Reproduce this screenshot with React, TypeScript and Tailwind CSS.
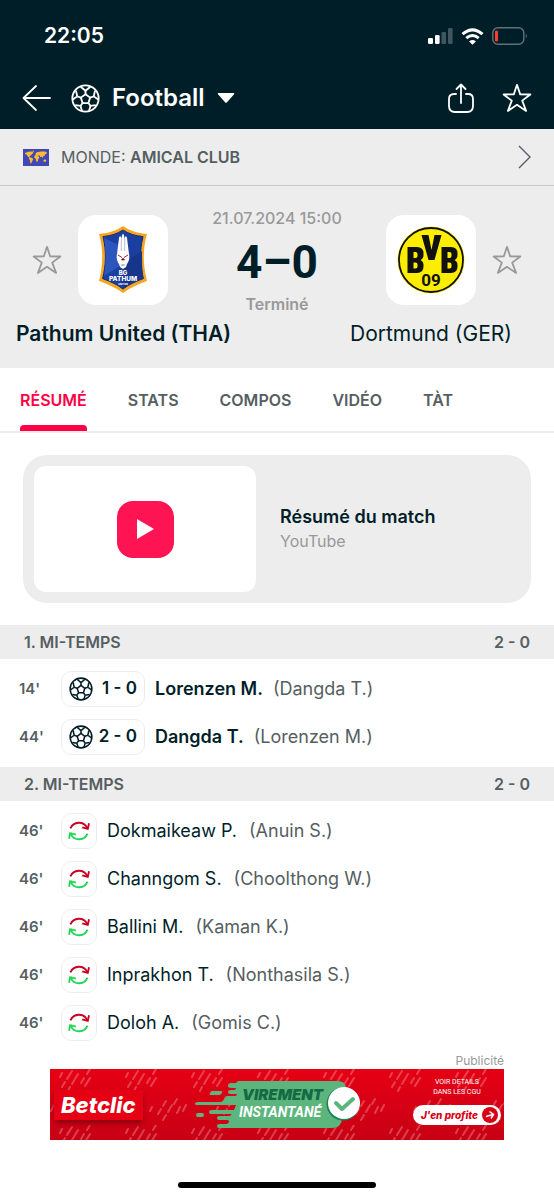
import type { ReactNode } from "react";

type Goal = { minute: string; score: string; scorer: string; assist: string };
type Substitution = { minute: string; playerIn: string; playerOut: string };

const tabs = ["Résumé", "Stats", "Compos", "Vidéo", "Tàt"];

const goals: Goal[] = [
  { minute: "14'", score: "1 - 0", scorer: "Lorenzen M.", assist: "(Dangda T.)" },
  { minute: "44'", score: "2 - 0", scorer: "Dangda T.", assist: "(Lorenzen M.)" },
];

const substitutions: Substitution[] = [
  { minute: "46'", playerIn: "Dokmaikeaw P.", playerOut: "(Anuin S.)" },
  { minute: "46'", playerIn: "Channgom S.", playerOut: "(Choolthong W.)" },
  { minute: "46'", playerIn: "Ballini M.", playerOut: "(Kaman K.)" },
  { minute: "46'", playerIn: "Inprakhon T.", playerOut: "(Nonthasila S.)" },
  { minute: "46'", playerIn: "Doloh A.", playerOut: "(Gomis C.)" },
];

const BallIcon = ({ className }: { className?: string }) => (
  <svg viewBox="0 0 30 30" fill="none" stroke="currentColor" strokeWidth="1.9" strokeLinejoin="round" className={className}>
    <circle cx="15" cy="15" r="13.6" />
    <path d="M15 10.6l4.8 3.5-1.8 5.6h-6l-1.800-5.600z" />
    <path d="M15 10.600V7M19.800 14.100l3.800-1.300M18 19.700l2.200 3M12 19.700l-2.200 3M10.200 14.100l-3.800-1.300" />
    <path d="M15 7l-5-4.200M15 7l5-4.200M23.600 12.800l1.200-6M23.600 12.800l4.900 3.600M20.200 22.700l5.400-.8M20.200 22.700L18.600 28M9.800 22.700L11.400 28M9.800 22.700l-5.400-.8M6.400 12.800L1.500 16.400M6.400 12.800l-1.200-6" />
  </svg>
);

const StarIcon = ({ className }: { className?: string }) => (
  <svg viewBox="0 0 30 30" fill="none" stroke="currentColor" strokeWidth="1.8" strokeLinejoin="round" className={className}>
    <path d="M15 1.8l3.2 9.6 10.2.1-8.2 6.1 3.9 10.3L15 21.8l-9.1 6.1 3.9-10.3-8.2-6.1 10.2-.1z" />
  </svg>
);

const SwapIcon = () => (
  <svg viewBox="0 0 24 24" fill="none" strokeWidth="1.8" className="size-6">
    <g stroke="#c8001e">
      <path d="M3.400 9.400C6.400 2.400 16.400 1.400 20.400 9.200" />
      <path d="M22 4.200l-1.200 5.600-5.600-1.400" />
    </g>
    <g stroke="#1fd655">
      <path d="M20.600 14.600C17.600 21.600 7.600 22.600 3.600 14.800" />
      <path d="M2 19.800l1.200-5.600 5.600 1.400" />
    </g>
  </svg>
);

const WorldFlag = () => (
  <svg viewBox="0 0 26 17" className="h-[17px] w-[26px]">
    <rect width="26" height="17" fill="#3f48b5" />
    <path
      fill="#fdb933"
      d="M2 4l3-1.2 4-.3 1.5 1L9 5.2 7.6 6.6 6.4 7.4l1 1 1.8.6 1.2 1.4-1.2 1.6-1 2.4-.9-.4-.3-2.6-1-1.6.3-1.4L4.6 7.2 3.4 5.2 2 5.2zM9 2l2.200-.4-.6 1.4zM12.400 5.400l.6-1.600 2-.8 3-.6 4 .2 2 1-.6 1.200-1.400.6-.6 1.600-1.400.4-.6 1.600-.9-1.600-1 .8-.9-1.600-1.400-.2.4 1.600 1 .2-1.300 1.800-.5 2.200-1 .8-.8-1.400-.2-1.800-1.600-1 .2-1.800 1.200-.9zM20.400 11l1.600-.8 1.400 1.400-.8 1.400-2-.4z"
    />
  </svg>
);

const PathumCrest = () => (
  <svg viewBox="0 0 50 70" className="h-[70px] w-[50px]" role="img" aria-label="BG Pathum United">
    <path d="M25 1c6 4.600 14 7 24 8-4.600 16-4 32 0 47-8 3-16 6-24 12-8-6-16-9-24-12 4-15 4.600-31 0-47C11 8 19 5.600 25 1z" fill="#f5a623" />
    <path d="M25 5c6 4 12 5.600 20 6.600-3.600 15-3 28 .4 42C38 56.400 31.500 59 25 64c-6.500-5-13-7.600-20.400-10.400 3.400-14 4-27 .4-42C13 10.600 19 9 25 5z" fill="#1b3fa0" stroke="#142c6b" strokeWidth="1" />
    <path d="M25 22L6 13c2 12 2 24 0 38l19-12z" fill="#2c56bd" />
    <path d="M25 38l19-12c0 10 0 18 1.200 27-7.500 3-14 5.500-20.200 10.500z" fill="#18358c" />
    <path d="M19 29l2-16c.8-3 2.200-2 2.400 1l.7-4c.5-1.500 1.300-1.500 1.800 0l.7 4c.2-3 1.600-4 2.400-1l2 16c1 5-.5 8-2 10l-1 3-3 2-3-2-1-3c-1.500-2-3-5-2-10z" fill="#fff" />
    <path d="M23.300 14v12M26.700 14v12" stroke="#9aa3b8" strokeWidth=".7" />
    <path d="M20 30l4 2.500M30 30l-4 2.500" stroke="#c8102e" strokeWidth="1" />
    <path d="M25 33l-1.500 2h3zM23.500 40h3" stroke="#333" strokeWidth=".7" fill="#333" />
    <g fill="#fff" textAnchor="middle" fontFamily="Inter, sans-serif" fontWeight="800">
      <text x="25" y="50" fontSize="6">BG</text>
      <text x="25" y="56" fontSize="6.500">PATHUM</text>
      <text x="25" y="59.500" fontSize="2.500">UNITED</text>
    </g>
  </svg>
);

const DortmundCrest = () => (
  <svg viewBox="0 0 68 68" className="size-[68px]" role="img" aria-label="Borussia Dortmund">
    <circle cx="34" cy="34" r="33.500" fill="#fdf01a" />
    <circle cx="34" cy="34" r="32" fill="#fdee00" stroke="#111" strokeWidth="1.800" />
    <g fill="#111" fillRule="evenodd">
      <path d="M10.500 21h9.500q6.500 0 6.500 6.500v1.500q0 3.500-3 5 3 1.500 3 5v1.500q0 6.500-6.500 6.500h-9.500zM16.500 26v6h2q2 0 2-2v-2q0-2-2-2zM16.500 36.500v6h2q2 0 2-2v-2q0-2-2-2z" />
      <path d="M44.500 21h9.500q6.500 0 6.500 6.500v1.500q0 3.500-3 5 3 1.500 3 5v1.500q0 6.500-6.500 6.500h-9.500zM50.500 26v6h2q2 0 2-2v-2q0-2-2-2zM50.500 36.500v6h2q2 0 2-2v-2q0-2-2-2z" />
    </g>
    <path d="M24.500 9h7l3 15 3-15h7l-7 25h-6z" fill="#111" />
    <text x="34" y="60" textAnchor="middle" fontSize="17" fontWeight="700" fontFamily="Roboto, sans-serif" fill="#111">09</text>
  </svg>
);

const StatusBar = () => (
  <div className="flex items-center justify-between pt-5 pr-[26px] pl-11">
    <span className="text-[21px] leading-8 font-semibold">22:05</span>
    <div className="flex items-center gap-2">
      <svg viewBox="0 0 25 16" className="h-4 w-[25px]" fill="#fff">
        <rect y="10" width="5" height="6" rx="1.300" />
        <rect x="7" y="7" width="4.600" height="9" rx="1.300" />
        <rect x="13.500" y="4" width="4.600" height="12" rx="1.300" opacity=".25" />
        <rect x="20" width="4.600" height="16" rx="1.300" opacity=".25" />
      </svg>
      <svg viewBox="0 0 23 17" className="h-[17px] w-[23px]" fill="none" stroke="#fff" strokeWidth="3">
        <path d="M1.500 6.200q10-8.600 20 0M5.300 10.100q6.200-5.200 12.400 0" />
        <path d="M11.500 16.800l-3.400-3.400q3.400-2.600 6.800 0z" fill="#fff" stroke="none" />
      </svg>
      <svg viewBox="0 0 36 18" className="h-[18px] w-9" fill="none">
        <rect x=".8" y=".8" width="31" height="16.400" rx="5" stroke="#5f7278" strokeWidth="1.400" />
        <rect x="3" y="3.500" width="3" height="11" rx="1.300" fill="#ff3b30" />
        <path d="M33.800 6.500q2 2.500 0 5z" fill="#5f7278" />
      </svg>
    </div>
  </div>
);

const TopBar = () => (
  <div className="flex items-center px-[22px] pt-[26px] pb-[11px]">
    <button type="button" aria-label="Retour" className="mr-5">
      <svg viewBox="0 0 29 28" fill="none" stroke="currentColor" strokeWidth="1.800" strokeLinecap="round" strokeLinejoin="round" className="h-7 w-[29px]">
        <path d="M28 14H1.500M14 2L1.500 14 14 26" />
      </svg>
    </button>
    <button type="button" className="flex items-center gap-3">
      <BallIcon className="size-[29px]" />
      <span className="text-2xl leading-10 font-semibold">Football</span>
      <svg viewBox="0 0 18 10" className="h-[10px] w-[18px]" fill="currentColor">
        <path d="M1.500 0h15q1.500 0 .5 1.200L10 9.200q-1 1-2 0L1 1.200Q0 0 1.500 0z" />
      </svg>
    </button>
    <div className="ml-auto flex items-center gap-7">
      <button type="button" aria-label="Partager">
        <svg viewBox="0 0 26 30" fill="none" stroke="currentColor" strokeWidth="1.800" strokeLinecap="round" strokeLinejoin="round" className="h-[30px] w-[26px]">
          <path d="M8 11H6q-5 0-5 5v7q0 6 6 6h12q6 0 6-6v-7q0-5-5-5h-2M13 20V2M8.500 6L13 1.500 17.500 6" />
        </svg>
      </button>
      <button type="button" aria-label="Ajouter aux favoris">
        <StarIcon className="size-[30px]" />
      </button>
    </div>
  </div>
);

const TeamLogo = ({ children }: { children: ReactNode }) => (
  <div className="flex size-[90px] items-center justify-center rounded-[18px] bg-white">{children}</div>
);

const MatchHeader = () => (
  <section className="bg-[#ededed] px-4 pt-5 pb-[18px]">
    <div className="flex items-center justify-center">
      <div className="flex flex-1 items-center justify-end gap-4">
        <button type="button" aria-label="Suivre Pathum United" className="text-[#999]">
          <StarIcon className="size-[30px]" />
        </button>
        <TeamLogo>
          <PathumCrest />
        </TeamLogo>
      </div>
      <div className="flex w-[218px] flex-col items-center text-[#999]">
        <span className="text-base leading-6 font-medium">21.07.2024 15:00</span>
        <span className="font-[Roboto,sans-serif] text-[46px] leading-[64px] font-bold text-[#001e28]">4–0</span>
        <span className="text-base leading-5 font-semibold">Terminé</span>
      </div>
      <div className="flex flex-1 items-center gap-4">
        <TeamLogo>
          <DortmundCrest />
        </TeamLogo>
        <button type="button" aria-label="Suivre Dortmund" className="text-[#999]">
          <StarIcon className="size-[30px]" />
        </button>
      </div>
    </div>
    <div className="flex justify-between pt-1 text-[21px] leading-8">
      <span className="w-[214px] text-center font-semibold whitespace-nowrap">Pathum United (THA)</span>
      <span className="w-[214px] text-center">Dortmund (GER)</span>
    </div>
  </section>
);

const Tabs = () => (
  <nav className="flex gap-[41px] border-b-2 border-[#ededed] px-5 text-base font-semibold text-[#555e61] uppercase">
    {tabs.map((tab, idx) => (
      <a
        key={tab}
        href="#"
        className={
          idx === 0
            ? "flex h-[63px] flex-col justify-between pt-5 text-[#ff0046] after:h-[6px] after:rounded-t after:bg-[#ff0046]"
            : "flex h-[63px] flex-col pt-5"
        }
      >
        {tab}
      </a>
    ))}
  </nav>
);

const HalfHeader = ({ title, score }: { title: string; score: string }) => (
  <h2 className="flex justify-between bg-[#ededed] px-6 text-base leading-[34px] font-semibold text-[#555e61]">
    <span>{title}</span>
    <span>{score}</span>
  </h2>
);

const Minute = ({ children }: { children: ReactNode }) => (
  <span className="w-[42px] text-[15px] font-semibold text-[#555e61]">{children}</span>
);

const VirementLogo = () => (
  <svg viewBox="0 0 166 48" className="h-12 w-[166px] shrink-0" role="img" aria-label="Virement instantané">
    <path d="M43 0h99q10 0 9 9l-4 29q-1 9-10 9H24q-2 0-2-2t3-2h6q2 0 3-2t-2-2h-8q-2 0-2-2t3-2h9q2 0 3-2H17q-3 0-3-2t3-2h22l2-5H3q-3 0-3-1.500T3 21h23q2 0 3-3t3-3h8q2 0 2-2h-7q-2 0-2-2t3-2h3q2 0 2-2h-5q-3 0-3-2.500t3-2.500h5z" fill="#5cb57c" />
    <path d="M17 10h9q2 0 1 2t-3 2h-8q-2 0-1-2t2-2zM3 32h4q2 0 2 2t-2 2H3q-2 0-2-2t2-2z" fill="#5cb57c" />
    <g fontStyle="italic">
      <text x="47" y="19" fontSize="15" fontWeight="900" fontFamily="Inter, sans-serif" fill="#146b43">VIREMENT</text>
      <text x="44" y="36" fontSize="14" fontWeight="700" fontFamily="Roboto, sans-serif" fill="#fff">INSTANTANÉ</text>
    </g>
    <circle cx="148" cy="23" r="16.500" fill="#168553" />
    <circle cx="149" cy="22" r="16" fill="#fff" />
    <path d="M141 22l6 6 11-10" fill="none" stroke="#5cb57c" strokeWidth="4" strokeLinecap="round" strokeLinejoin="round" />
  </svg>
);

// slanted dashes scattered over the banner
const BannerPattern = () => (
  <svg className="absolute inset-0 size-full" aria-hidden="true">
    <defs>
      <pattern id="dashes" width="66" height="56" patternUnits="userSpaceOnUse">
        <path
          d="M12 4l-2 4M22 2L17 10M15 13l-3 5M28 5l-6 10M20 18l-2 4M40 0l-3 5M34 9l-3 5M40 9l-5 8M50 32l-3 5M45 40l-3 5M56 36l-4 7M50 46l-3 5M61 30l-3 5M4 36l-3 6M64 38l-3 6M36 38l-2 4"
          stroke="#fff"
          strokeOpacity=".25"
          strokeWidth="2"
          strokeLinecap="round"
        />
      </pattern>
    </defs>
    <rect width="100%" height="100%" fill="url(#dashes)" />
  </svg>
);

const AdBanner = () => (
  <aside className="mx-[50px]">
    <p className="text-right text-xs leading-4 text-[#999]">Publicité</p>
    <a href="#" className="relative flex h-[71px] items-center overflow-hidden bg-gradient-to-b from-[#e60014] to-[#c80014] text-white">
      <BannerPattern />
      <span className="relative ml-1 bg-[#e60014] px-[7px] text-[22px] leading-[30px] font-extrabold italic shadow-md shadow-[#90000c]">
        Betclic
      </span>
      <span className="relative ml-auto">
        <VirementLogo />
      </span>
      <span className="relative mr-[3px] ml-auto flex flex-col items-center self-start pt-2">
        <span className="text-center font-[Roboto,sans-serif] text-[7px] leading-[10px] uppercase">
          Voir details
          <br />
          dans les CGU
        </span>
        <span className="mt-2 flex items-center gap-1 rounded-full bg-white py-px pr-[3px] pl-2 text-[10px] leading-[18px] font-extrabold text-[#d80014] italic">
          J'en profite
          <svg viewBox="0 0 16 16" className="size-4" fill="none" stroke="#fff" strokeWidth="1.500">
            <circle cx="8" cy="8" r="8" fill="#d80014" stroke="none" />
            <path d="M4 9.500l7-2M7.500 4.500l4 3-2.500 4" />
          </svg>
        </span>
      </span>
    </a>
  </aside>
);

export default function App() {
  return (
    <main className="flex min-h-screen flex-col bg-white font-[Inter,sans-serif] text-[#001e28]">
      <header className="bg-[#001e28] text-white">
        <StatusBar />
        <TopBar />
      </header>

      <a href="#" className="flex items-center border-b border-[#c8c8c8] bg-[#ededed] px-[23px] leading-[56px] text-[#555e61]">
        <WorldFlag />
        <span className="ml-3">
          MONDE: <b className="font-semibold">AMICAL CLUB</b>
        </span>
        <svg viewBox="0 0 13 24" fill="none" stroke="currentColor" strokeWidth="1.400" className="ml-auto h-6 w-[13px]">
          <path d="M1 1l11 11L1 23" />
        </svg>
      </a>

      <MatchHeader />
      <Tabs />

      <a href="#" className="mx-[23px] my-[22px] flex items-center rounded-[24px] bg-[#ededed] p-[11px]">
        <span className="flex h-[126px] w-[222px] items-center justify-center rounded-xl bg-white">
          <span className="flex size-[57px] items-center justify-center rounded-[16px] bg-[#ff1453]">
            <svg viewBox="0 0 17 20" className="h-5 w-[17px]" fill="#fff">
              <path d="M0 0l17 10L0 20z" />
            </svg>
          </span>
        </span>
        <span className="ml-6 flex flex-col">
          <span className="text-lg leading-6 font-semibold">Résumé du match</span>
          <span className="text-base leading-6 text-[#999]">YouTube</span>
        </span>
      </a>

      <section>
        <HalfHeader title="1. MI-TEMPS" score="2 - 0" />
        <ul className="py-[6px]">
          {goals.map((goal) => (
            <li key={goal.minute} className="flex h-12 items-center pl-[19px]">
              <Minute>{goal.minute}</Minute>
              <span className="flex h-9 w-[84px] items-center justify-between rounded-[10px] border border-[#ededed] px-[7px] text-[17px] font-semibold">
                <BallIcon className="size-6" />
                {goal.score}
              </span>
              <span className="ml-[10px] text-lg font-semibold">{goal.scorer}</span>
              <span className="ml-[10px] text-lg text-[#555e61]">{goal.assist}</span>
            </li>
          ))}
        </ul>
      </section>

      <section>
        <HalfHeader title="2. MI-TEMPS" score="2 - 0" />
        <ul className="py-[6px]">
          {substitutions.map((sub) => (
            <li key={sub.playerIn} className="flex h-12 items-center pl-[19px]">
              <Minute>{sub.minute}</Minute>
              <span className="flex size-9 items-center justify-center rounded-[10px] border border-[#ededed]">
                <SwapIcon />
              </span>
              <span className="ml-[10px] text-lg">{sub.playerIn}</span>
              <span className="ml-3 text-lg text-[#555e61]">{sub.playerOut}</span>
            </li>
          ))}
        </ul>
      </section>

      <AdBanner />

      <div className="mx-auto mt-auto mb-3 h-[6px] w-[198px] rounded-full bg-black" />
    </main>
  );
}
